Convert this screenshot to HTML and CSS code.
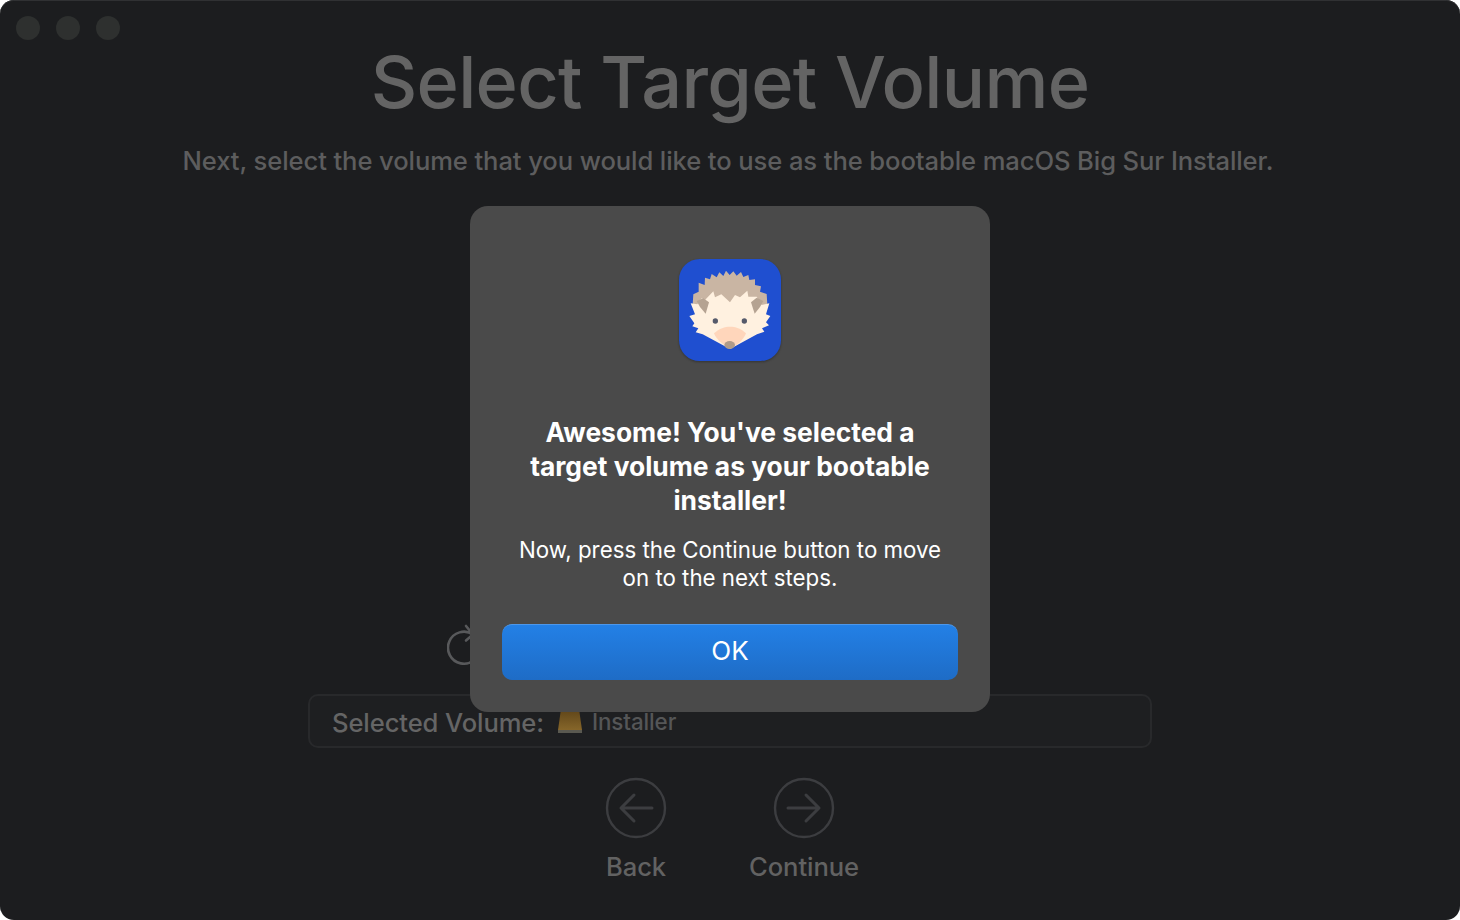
FILE: index.html
```html
<!DOCTYPE html>
<html lang="en">
<head>
<meta charset="utf-8">
<title>Select Target Volume</title>
<link rel="stylesheet" href="styles.css">
</head>
<body>
<div class="window">
  <div class="traffic">
    <span class="light"></span><span class="light"></span><span class="light"></span>
  </div>
  <main class="content">
    <h1 class="title">Select Target Volume</h1>
    <p class="subtitle">Next, select the volume that you would like to use as the bootable macOS Big Sur Installer.</p>
    <div class="refresh-row">
      <svg class="refresh" width="40" height="44" viewBox="0 0 40 44" fill="none" stroke="#58595b" stroke-width="2.6" stroke-linecap="round" stroke-linejoin="round">
        <path d="M26 10.5A16 16 0 1 0 33 24"/>
        <path d="M19 2l7 8.500-7 6"/>
      </svg>
    </div>
    <div class="selected">
      <span class="selected-label">Selected Volume:</span>
      <svg class="disk" width="26" height="26" viewBox="0 0 26 26">
        <defs>
          <linearGradient id="gold" x1="0" y1="0" x2="0" y2="1">
            <stop offset="0" stop-color="#5e4418"/>
            <stop offset="1" stop-color="#86662a"/>
          </linearGradient>
        </defs>
        <path d="M4 0h18l3 21H1z" fill="url(#gold)"/>
        <path d="M1 21h24v3H1z" fill="#5a5950"/>
      </svg>
      <span class="selected-name">Installer</span>
    </div>
    <nav class="nav">
      <div class="nav-item">
        <svg width="62" height="62" viewBox="0 0 62 62" fill="none" stroke="#3c3d40" stroke-width="2.400" stroke-linecap="round" stroke-linejoin="round">
          <circle cx="31" cy="31" r="29"/>
          <path class="arrow" d="M47 31H16M29 18L16 31l13 13"/>
        </svg>
        <span class="nav-label">Back</span>
      </div>
      <div class="nav-item">
        <svg width="62" height="62" viewBox="0 0 62 62" fill="none" stroke="#3c3d40" stroke-width="2.400" stroke-linecap="round" stroke-linejoin="round">
          <circle cx="31" cy="31" r="29"/>
          <path class="arrow" d="M15 31h31M33 18l13 13-13 13"/>
        </svg>
        <span class="nav-label">Continue</span>
      </div>
    </nav>
  </main>
  <div class="modal" role="dialog">
    <svg class="app-icon" width="102" height="102" viewBox="57 42 306 306">
      <rect x="57" y="42" width="306" height="306" rx="62" fill="#1f4fd0"/>
      <path fill="#c9b5a3" d="M98 178L100 148L116 140L116 113L134 120L135 98L150 103L155 87L170 97L178 82L190 93L198 77L209 90L220 79L230 92L243 81L250 96L265 90L268 105L285 103L285 120L303 124L300 140L320 147L322 178L210 215z"/>
      <path fill="#fff1e0" d="M92 175L112 178L125 160L135 165L160 139L165 157L184 148L210 172L225 150L240 157L262 137L265 155L290 155L305 180L328 175L318 208L331 213L318 232L327 241L306 250L313 260L291 268L210 312L128 268L107 262L115 250L97 244L103 235L88 213L105 208z"/>
      <path fill="#b5a392" d="M110 168L130 160L147 172L137 206L120 186z"/>
      <path fill="#b5a392" d="M310 168L290 158L273 172L284 206L300 186z"/>
      <circle cx="166" cy="228" r="8" fill="#555a6b"/>
      <circle cx="253" cy="228" r="8" fill="#555a6b"/>
      <path fill="#ffd6bb" d="M162 265C178 250 195 245 210 245C226 245 243 250 258 265C250 285 236 298 212 310C186 298 170 285 162 265z"/>
      <ellipse cx="209" cy="300" rx="16" ry="12" fill="#b09b8a"/>
    </svg>
    <h2 class="modal-title">Awesome! You've selected a target volume as your bootable installer!</h2>
    <p class="modal-text">Now, press the Continue button to move on to the next steps.</p>
    <button class="ok" type="button">OK</button>
  </div>
</div>
</body>
</html>
```

FILE: styles.css
```css
* { box-sizing: border-box; }
html, body { margin: 0; padding: 0; background: #fff; }
body { width: 1460px; height: 920px; overflow: hidden; font-family: Inter, "Noto Sans", "Liberation Sans", sans-serif; }

.window {
  position: relative;
  width: 1460px;
  height: 920px;
  background: #1c1d1f;
  border-radius: 14px;
  overflow: hidden;
  box-shadow: inset 0 1px 0 #303133;
}
.traffic { position: absolute; top: 16px; left: 16px; display: flex; gap: 16px; }
.light { width: 24px; height: 24px; border-radius: 50%; background: #2e302f; }

.content { display: flex; flex-direction: column; align-items: center; height: 100%; }
.title {
  margin: 38px 0 0;
  font-size: 72px;
  line-height: 88px;
  font-weight: 500;
  color: #646464;
  letter-spacing: -0.7px;
}
.subtitle {
  margin: 20px 0 0 -4px;
  font-size: 25.6px;
  line-height: 30px;
  font-weight: 500;
  letter-spacing: -0.1px;
  color: #5d5d5e;
}
.refresh-row { align-self: stretch; margin-top: 448px; height: 70px; padding-left: 447px; }
.refresh { display: block; }
.selected {
  width: 844px;
  height: 54px;
  border: 2px solid #28292b;
  border-radius: 10px;
  background: #1e1f21;
  display: flex;
  align-items: center;
  padding-left: 22px;
}
.selected-label { margin-top: 2px; font-size: 25.6px; font-weight: 500; letter-spacing: -0.1px; color: #656565; }
.disk { margin: 2px 0 0 13px; }
.selected-name { margin-left: 9px; font-size: 22.4px; font-weight: 500; letter-spacing: -0.1px; color: #555657; }
.nav { display: flex; gap: 84px; margin: 29px 20px 0 0; }
.nav-item { width: 84px; display: flex; flex-direction: column; align-items: center; }
.arrow { stroke-width: 3; }
.nav-label { margin-top: 12px; font-size: 25.6px; line-height: 32px; font-weight: 500; letter-spacing: -0.1px; color: #626262; white-space: nowrap; }

.modal {
  position: absolute;
  left: 470px;
  top: 206px;
  width: 520px;
  height: 506px;
  background: #4a4a4a;
  border-radius: 18px;
  padding: 53px 32px 32px;
  display: flex;
  flex-direction: column;
  align-items: center;
  text-align: center;
}
.app-icon { display: block; flex: none; filter: drop-shadow(0 1px 1px rgba(0, 0, 0, 0.3)); }
.modal-title {
  margin: 54px 0 0;
  width: 420px;
  font-size: 26.4px;
  line-height: 34px;
  font-weight: 700;
  color: #fff;
}
.modal-text {
  margin: 19px 0 0;
  width: 440px;
  font-size: 22.3px;
  line-height: 28px;
  color: #fff;
}
.ok {
  margin-top: auto;
  width: 456px;
  height: 56px;
  border: 0;
  border-top: 1px solid #4d97ea;
  border-radius: 10px;
  padding: 0 0 4px;
  background: linear-gradient(#2380e6, #1e6cc6);
  color: #fff;
  font: 400 26px Inter, "Noto Sans", sans-serif;
}
```
